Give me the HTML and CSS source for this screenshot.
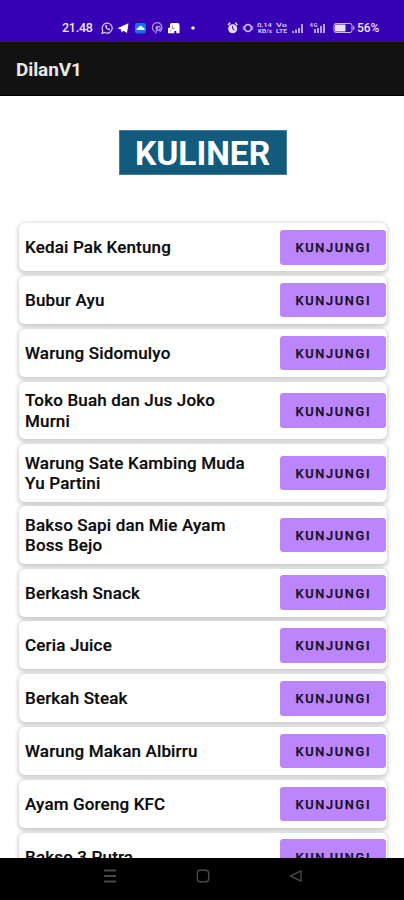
FILE: index.html
```
<!DOCTYPE html>
<html lang="id">
<head>
<meta charset="utf-8">
<title>DilanV1</title>
<link rel="stylesheet" href="styles.css">
</head>
<body>
<div class="screen">
  <header class="status">
    <span class="time">21.48</span>
    <svg class="notices" width="97" height="14" viewBox="0 0 97 14" aria-hidden="true">
      <path d="M1 12.3l.8-2.8a5 5 0 1 1 2 2z" fill="none" stroke="#d9ccf5" stroke-width="1.2"/>
      <path d="M4 4.6c0 2.4 2 4.6 4.5 4.8l.8-1.3-1.5-.9-.8.6-1.2-1.3.5-.8-.8-1.6z" fill="#d9ccf5"/>
      <path d="M16.5 7.2L27.5 2.2 26 12l-3.6-2.2-1.8 1.8-.5-3z" fill="#fff"/>
      <rect x="34" y="2" width="11" height="10.5" rx="2" fill="#1672ea"/>
      <path d="M35.5 9a2.3 2.3 0 0 1 1.8-2.5 2.5 2.5 0 0 1 4.7 0A2.2 2.2 0 0 1 43.7 9z" fill="#e8f4ff"/>
      <path d="M53.5 10.5a4.8 4.8 0 1 1 5 .2M54.5 12.5l2.5-7.2M55 7.8c-.8-3 4.6-3.6 4.2-.4-.3 2-2.6 2.4-3.1.8" fill="none" stroke="#b89be8" stroke-width="1.2"/>
      <path d="M70.5 2h6q2 0 2 2v8.3h-3.2V10h-2v2.3H67V7l2-.5V3.5q0-1.5 1.5-1.5z" fill="#fff"/>
      <path d="M71.5 4.5v3.2h2.3M69 10.5l1.5-2" fill="none" stroke="#8d6fd4" stroke-width=".9"/>
      <rect x="90.5" y="5.5" width="3" height="3" rx=".8" fill="#fff"/>
    </svg>
    <svg class="signals" width="128" height="14" viewBox="0 0 128 14" aria-hidden="true">
      <circle cx="5.7" cy="7.7" r="4.5" fill="#e5dcf8"/>
      <path d="M1 4l2.2-2.2M10.4 4L8.2 1.8" stroke="#e5dcf8" stroke-width="1.6"/>
      <path d="M5.7 5v3l1.8 1" fill="none" stroke="#3700b3" stroke-width="1"/>
      <circle cx="21" cy="7" r="3.4" fill="none" stroke="#c9b6ee" stroke-width="1.7"/>
      <path d="M16.3 5v4M25.7 5v4" stroke="#a889e0"/>
      <g class="tiny"><text x="30" y="6.3" textLength="15" lengthAdjust="spacingAndGlyphs">0,14</text><text x="31" y="12.4" textLength="14" lengthAdjust="spacingAndGlyphs">KB/s</text><text x="49" y="6.3" textLength="11" lengthAdjust="spacingAndGlyphs">Vo</text><text x="49" y="12.4" textLength="11" lengthAdjust="spacingAndGlyphs">LTE</text></g>
      <path d="M66 12v-2M69 12V8.5M72 12V7M75 12V3" stroke="#cdbcf0" stroke-width="1.7"/>
      <text class="tiny" x="82.5" y="6" textLength="8">4G</text>
      <path d="M88 12V8M91 12V7M94 12V5M97 12V3" stroke="#cdbcf0" stroke-width="1.7"/>
      <rect x="107" y="2.5" width="18" height="9" rx="2" fill="none" stroke="#cdbcf0"/>
      <rect x="108" y="3.5" width="10.5" height="7" rx=".5" fill="#e7dffa"/>
      <path d="M126.8 5.2v3.6" stroke="#cdbcf0" stroke-width="1.2"/>
    </svg>
    <span class="battery">56%</span>
  </header>
  <div class="appbar">DilanV1</div>
  <main class="content">
    <h1 class="title">KULINER</h1>
    <ul class="places">
      <li class="place"><span class="name">Kedai Pak Kentung</span><button class="visit">KUNJUNGI</button></li>
      <li class="place"><span class="name">Bubur Ayu</span><button class="visit">KUNJUNGI</button></li>
      <li class="place"><span class="name">Warung Sidomulyo</span><button class="visit">KUNJUNGI</button></li>
      <li class="place tall"><span class="name">Toko Buah dan Jus Joko<br>Murni</span><button class="visit">KUNJUNGI</button></li>
      <li class="place tall"><span class="name">Warung Sate Kambing Muda<br>Yu Partini</span><button class="visit">KUNJUNGI</button></li>
      <li class="place tall"><span class="name">Bakso Sapi dan Mie Ayam<br>Boss Bejo</span><button class="visit">KUNJUNGI</button></li>
      <li class="place"><span class="name">Berkash Snack</span><button class="visit">KUNJUNGI</button></li>
      <li class="place"><span class="name">Ceria Juice</span><button class="visit">KUNJUNGI</button></li>
      <li class="place"><span class="name">Berkah Steak</span><button class="visit">KUNJUNGI</button></li>
      <li class="place"><span class="name">Warung Makan Albirru</span><button class="visit">KUNJUNGI</button></li>
      <li class="place"><span class="name">Ayam Goreng KFC</span><button class="visit">KUNJUNGI</button></li>
      <li class="place"><span class="name">Bakso 3 Putra</span><button class="visit">KUNJUNGI</button></li>
    </ul>
  </main>
  <nav class="navbar">
    <svg width="14" height="14" viewBox="0 0 14 14"><path d="M1 1.5h12M1 7h12M1 12.5h12" stroke="#484848" stroke-width="1.8"/></svg>
    <svg width="14" height="14" viewBox="0 0 14 14"><rect x="1.3" y="1.3" width="11.4" height="11.4" rx="3" fill="none" stroke="#484848" stroke-width="1.4"/></svg>
    <svg width="14" height="14" viewBox="0 0 14 14"><path d="M12 1.8v10.4L1.5 7z" fill="none" stroke="#484848" stroke-width="1.4" stroke-linejoin="round"/></svg>
  </nav>
</div>
</body>
</html>
```
FILE: styles.css
```
* { box-sizing: border-box; }
body { margin: 0; font-family: Roboto, "Liberation Sans", sans-serif; background: #fff; }
.screen { width: 404px; height: 900px; display: flex; flex-direction: column; overflow: hidden; }
.status { height: 42px; flex: none; display: flex; align-items: center; padding: 13px 0 0 62px; background: #3700b3; color: #ece6fa; }
.time { width: 39px; font-size: 12.5px; font-weight: 500; letter-spacing: -.25px; }
.notices { flex: none; }
.signals { flex: none; margin-left: 29px; }
.battery { margin-left: 2px; font-size: 12px; font-weight: 500; letter-spacing: -.1px; }
.tiny { font-size: 6px; font-weight: 700; fill: #d2c3f3; }
.appbar { height: 54px; flex: none; display: flex; align-items: center; padding: 1px 0 0 16px; background: #121212; border-bottom: 1px solid #000; color: #e8e8e8; font-size: 19px; font-weight: 700; letter-spacing: -.1px; }
.content { flex: 1; min-height: 0; overflow: hidden; display: flex; flex-direction: column; align-items: center; padding-top: 34px; }
.title { flex: none; width: 168px; height: 45px; margin: 0 0 0 1px; padding-top: 2px; display: flex; align-items: center; justify-content: center; background: #125b7c; border: 1px solid #477f9a; color: #fff; font-size: 33.5px; font-weight: 700; }
.places { flex: none; width: 368px; margin: 48.4px 0 0 2px; padding: 0; display: flex; flex-direction: column; gap: 4.8px; list-style: none; }
.place { height: 48px; display: flex; align-items: center; justify-content: space-between; padding: 0 .9px 0 6px; border-radius: 6px; background: #fff; box-shadow: 0 1.5px 4px 1px rgba(0, 0, 0, .2); }
.tall { height: 57.5px; }
.name { font-size: 17px; line-height: 20.3px; font-weight: 500; letter-spacing: .16px; color: #0b0b0b; -webkit-text-stroke: .2px #0b0b0b; }
.visit { width: 106.5px; height: 34.5px; padding: 1px 0 0 1px; border: 0; border-radius: 3px; background: #bb86fc; color: #150c20; font: 500 12.8px Roboto, sans-serif; letter-spacing: 1.65px; -webkit-text-stroke: .25px #150c20; }
.navbar { height: 42px; flex: none; display: flex; justify-content: center; gap: 79px; padding: 11px 0 0 2px; background: #000; }
```
